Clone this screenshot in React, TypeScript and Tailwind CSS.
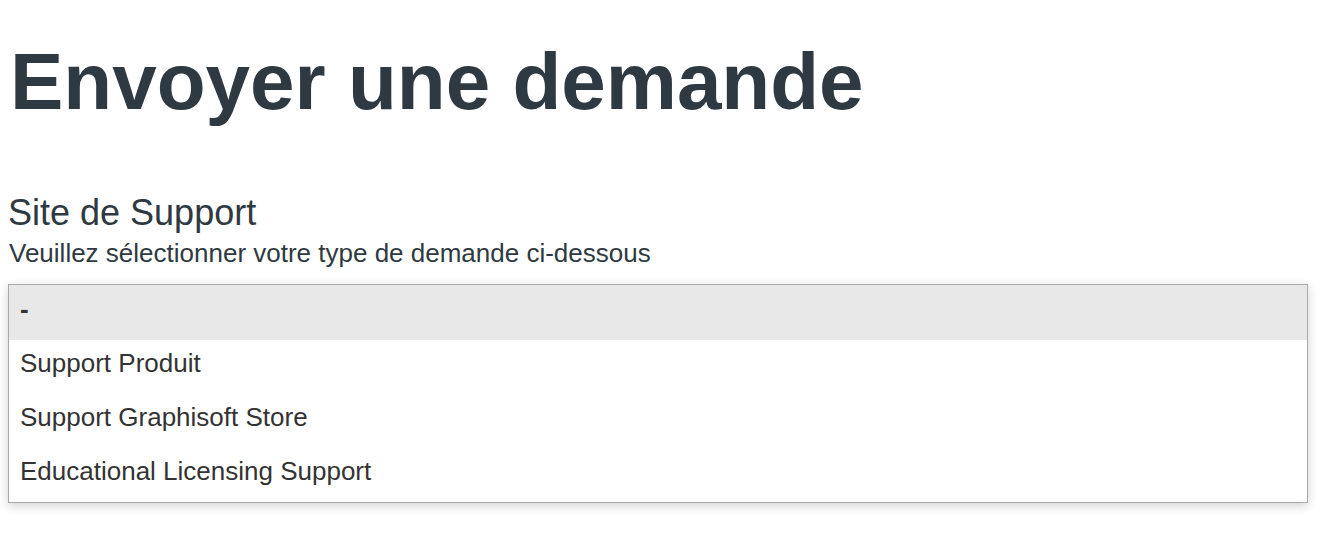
import React from "react";

export default function App() {
  const options = ["Support Produit", "Support Graphisoft Store", "Educational Licensing Support"];
  return (
    <div className="w-[1322px] h-[534px] bg-white overflow-hidden" style={{ fontFamily: '"Liberation Sans", Arial, sans-serif' }}>
      <div className="px-[8px]">
        <h1 className="text-[80px] font-bold leading-[80px] text-[#2f3941] pt-[42px] pl-[2px]">Envoyer une demande</h1>
        <div className="mt-[73px] text-[36px] leading-[36px] text-[#2f3941]">Site de Support</div>
        <div className="mt-[9px] text-[26px] leading-[26px] text-[#2f3941] pl-[1px]">Veuillez sélectionner votre type de demande ci-dessous</div>
        <div className="mt-[18px] w-[1300px] border border-[#a9a9a9] bg-white shadow-[0_3px_10px_rgba(0,0,0,0.18)]">
          <div className="h-[55px] bg-[#e8e8e8] pt-[11px] pl-[11px] text-[26px] leading-[26px] text-[#333] font-bold">-</div>
          {options.map((o) => (
            <div key={o} className="h-[54px] pt-[10px] pl-[11px] text-[26px] leading-[26px] text-[#333]">{o}</div>
          ))}
        </div>
      </div>
    </div>
  );
}
